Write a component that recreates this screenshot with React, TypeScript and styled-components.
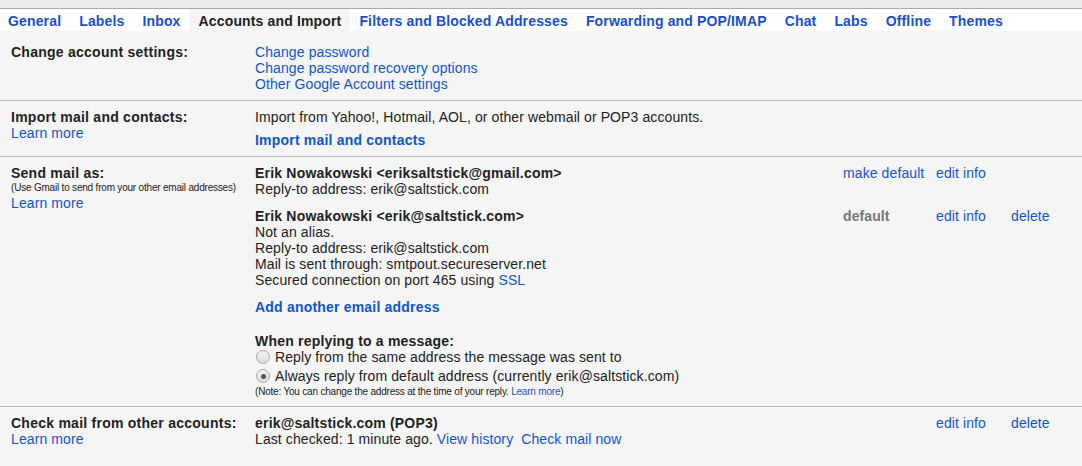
import React from 'react';
import styled, { createGlobalStyle } from 'styled-components';

const GlobalStyle = createGlobalStyle`
  html, body { margin: 0; padding: 0; }
  body {
    background: #f5f5f5;
    font-family: Arial, "Liberation Sans", sans-serif;
    font-size: 14px;
    letter-spacing: 0.1px;
    line-height: 16px;
    color: #222;
  }
`;

const Page = styled.div`
  width: 1082px;
  min-height: 466px;
  background: #f5f5f5;
  overflow: hidden;
`;

const TopStrip = styled.div`
  height: 8px;
  background: #ececec;
  border-bottom: 1px solid #aaa;
`;

const TabBar = styled.nav`
  display: flex;
  height: 22px;
  background: #fff;
`;

const Tab = styled.a<{ $active?: boolean }>`
  display: flex;
  align-items: center;
  padding: 1px 9px 0;
  font-weight: bold;
  letter-spacing: 0.15px;
  color: ${p => (p.$active ? '#222' : '#1a4fcc')};
  background: ${p => (p.$active ? '#f5f5f5' : 'transparent')};
  text-decoration: none;
  white-space: nowrap;
  cursor: pointer;
  &:first-child { padding-left: 8px; }
`;

const Section = styled.div<{ $first?: boolean; $last?: boolean }>`
  display: grid;
  grid-template-columns: 244px 1fr;
  padding: ${p => (p.$first ? '13px' : '8px')} 0 8px 11px;
  border-bottom: ${p => (p.$last ? 'none' : '1px solid #b9b9b9')};
`;

const Label = styled.div`
  display: flex;
  flex-direction: column;
`;

const LabelTitle = styled.span`
  font-weight: bold;
  letter-spacing: 0.25px;
`;

const SmallText = styled.span`
  font-size: 10px;
  line-height: 14px;
  letter-spacing: -0.2px;
`;

const Link = styled.a<{ $bold?: boolean }>`
  color: #15c;
  font-weight: ${p => (p.$bold ? 'bold' : 'normal')};
  letter-spacing: ${p => (p.$bold ? '0.2px' : 'inherit')};
  text-decoration: none;
  cursor: pointer;
`;

const Value = styled.div`
  display: flex;
  flex-direction: column;
`;

const Spacer = styled.div<{ $h: number }>`
  height: ${p => p.$h}px;
`;

const AccountRow = styled.div`
  display: grid;
  grid-template-columns: 588px 93px 75px 1fr;
  align-items: start;
`;

const Lines = styled.div`
  display: flex;
  flex-direction: column;
`;

const Bold = styled.span`
  font-weight: bold;
  letter-spacing: 0.2px;
`;

const DefaultTag = styled.span`
  font-weight: bold;
  color: #777;
`;

const RadioRow = styled.label`
  display: flex;
  align-items: center;
  height: 16px;
  margin-top: 3px;
  &:first-of-type { margin-top: 0; }
`;

const Radio = styled.span<{ $checked?: boolean }>`
  position: relative;
  width: 12px;
  height: 12px;
  margin: 0 5px 0 1px;
  border: 1px solid #a9a9a9;
  border-radius: 50%;
  background: linear-gradient(#f2f2f2, #dcdcdc);
  &::after {
    content: '';
    display: ${p => (p.$checked ? 'block' : 'none')};
    position: absolute;
    left: 3.5px;
    top: 3.5px;
    width: 5px;
    height: 5px;
    border-radius: 50%;
    background: #555;
  }
`;

const NoteText = styled.span`
  font-size: 10px;
  line-height: 12px;
  margin-top: 2px;
  letter-spacing: -0.2px;
`;

const tabs = [
  'General',
  'Labels',
  'Inbox',
  'Accounts and Import',
  'Filters and Blocked Addresses',
  'Forwarding and POP/IMAP',
  'Chat',
  'Labs',
  'Offline',
  'Themes',
];

export default function App() {
  return (
    <Page>
      <GlobalStyle />
      <TopStrip />
      <TabBar>
        {tabs.map(t => (
          <Tab key={t} $active={t === 'Accounts and Import'}>{t}</Tab>
        ))}
      </TabBar>

      <Section $first>
        <Label>
          <LabelTitle>Change account settings:</LabelTitle>
        </Label>
        <Value>
          <Link>Change password</Link>
          <Link>Change password recovery options</Link>
          <Link>Other Google Account settings</Link>
        </Value>
      </Section>

      <Section>
        <Label>
          <LabelTitle>Import mail and contacts:</LabelTitle>
          <Link>Learn more</Link>
        </Label>
        <Value>
          <span>Import from Yahoo!, Hotmail, AOL, or other webmail or POP3 accounts.</span>
          <Spacer $h={7} />
          <Link $bold>Import mail and contacts</Link>
        </Value>
      </Section>

      <Section>
        <Label>
          <LabelTitle>Send mail as:</LabelTitle>
          <SmallText>(Use Gmail to send from your other email addresses)</SmallText>
          <Link>Learn more</Link>
        </Label>
        <Value>
          <AccountRow>
            <Lines>
              <Bold>Erik Nowakowski &lt;eriksaltstick@gmail.com&gt;</Bold>
              <span>Reply-to address: erik@saltstick.com</span>
            </Lines>
            <Link>make default</Link>
            <Link>edit info</Link>
            <span />
          </AccountRow>
          <Spacer $h={11} />
          <AccountRow>
            <Lines>
              <Bold>Erik Nowakowski &lt;erik@saltstick.com&gt;</Bold>
              <span>Not an alias.</span>
              <span>Reply-to address: erik@saltstick.com</span>
              <span>Mail is sent through: smtpout.secureserver.net</span>
              <span>Secured connection on port 465 using <Link>SSL</Link></span>
            </Lines>
            <DefaultTag>default</DefaultTag>
            <Link>edit info</Link>
            <Link>delete</Link>
          </AccountRow>
          <Spacer $h={11} />
          <Link $bold>Add another email address</Link>
          <Spacer $h={18} />
          <Bold>When replying to a message:</Bold>
          <RadioRow>
            <Radio />
            Reply from the same address the message was sent to
          </RadioRow>
          <RadioRow>
            <Radio $checked />
            Always reply from default address (currently erik@saltstick.com)
          </RadioRow>
          <NoteText>
            (Note: You can change the address at the time of your reply. <Link>Learn more</Link>)
          </NoteText>
        </Value>
      </Section>

      <Section $last>
        <Label>
          <LabelTitle>Check mail from other accounts:</LabelTitle>
          <Link>Learn more</Link>
        </Label>
        <Value>
          <AccountRow>
            <Lines>
              <Bold>erik@saltstick.com (POP3)</Bold>
              <span>
                Last checked: 1 minute ago. <Link>View history</Link>&nbsp;&nbsp;<Link>Check mail now</Link>
              </span>
            </Lines>
            <span />
            <Link>edit info</Link>
            <Link>delete</Link>
          </AccountRow>
        </Value>
      </Section>
    </Page>
  );
}
